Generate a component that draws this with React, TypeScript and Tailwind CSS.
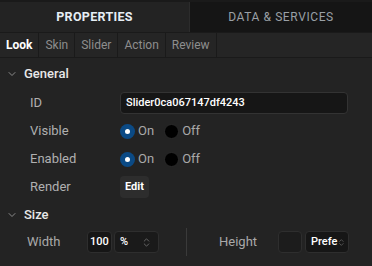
import { ChevronDown, ChevronsUpDown } from 'lucide-react'

const tabs = ['Look', 'Skin', 'Slider', 'Action', 'Review']

function Radio({ checked, label }: { checked: boolean; label: string }) {
  return (
    <div className="flex items-center gap-[3px]">
      {checked ? (
        <span className="flex h-[15px] w-[15px] items-center justify-center rounded-full bg-[#0b4a85]">
          <span className="h-[5px] w-[5px] rounded-full bg-white" />
        </span>
      ) : (
        <span className="h-[15px] w-[15px] rounded-full border border-[#2a2a2a] bg-black" />
      )}
      <span className="text-[13px] text-[#a9a9a9]">{label}</span>
    </div>
  )
}

function Row({ label, children }: { label: string; children: React.ReactNode }) {
  return (
    <div className="flex h-[28px] items-center">
      <span className="w-[120px] pl-[30px] text-[13px] text-[#b0b0b0]">{label}</span>
      {children}
    </div>
  )
}

export default function App() {
  return (
    <div
      className="h-[266px] w-[372px] overflow-hidden bg-[#232323]"
      style={{ fontFamily: 'Roboto, "Liberation Sans", sans-serif' }}
    >
      {/* top tabs */}
      <div className="flex h-[32px] border-t-2 border-[#1a1a1a]">
        <div className="flex w-[189px] items-center justify-center bg-[#232323] text-[12.5px] font-bold tracking-[0.3px] text-[#e6eef5]">
          PROPERTIES
        </div>
        <div className="flex flex-1 items-center justify-center border-l border-[#2c2c2c] bg-[#151515] text-[12px] tracking-[0.6px] text-[#9aa0a6]">
          DATA &amp; SERVICES
        </div>
      </div>

      {/* sub tabs */}
      <div className="flex h-[26px] border-y border-[#1a1a1a] bg-[#252525]">
        {tabs.map((t, i) => (
          <div
            key={t}
            className={`flex items-center border-r border-[#1a1a1a] px-[6px] text-[12px] ${
              i === 0 ? 'font-bold text-white' : 'text-[#8e8e8e]'
            }`}
          >
            {t}
          </div>
        ))}
      </div>

      {/* General */}
      <div className="flex h-[31px] items-center gap-[6px] pl-[6px] pt-[1px]">
        <ChevronDown size={12} className="text-[#8a8a8a]" />
        <span className="text-[13px] font-medium text-[#e8e8e8]">General</span>
      </div>

      <Row label="ID">
        <div className="flex h-[22px] w-[228px] items-center rounded-[4px] border border-[#333] bg-[#161616] pl-[5px] text-[11px] font-medium text-white">
          Slider0ca067147df4243
        </div>
      </Row>
      <Row label="Visible">
        <div className="flex items-center gap-[10px]">
          <Radio checked label="On" />
          <Radio checked={false} label="Off" />
        </div>
      </Row>
      <Row label="Enabled">
        <div className="flex items-center gap-[10px]">
          <Radio checked label="On" />
          <Radio checked={false} label="Off" />
        </div>
      </Row>
      <Row label="Render">
        <button className="flex h-[22px] items-center rounded-[4px] bg-[#2d2d2d] px-[5px] text-[11px] font-bold text-white">
          Edit
        </button>
      </Row>

      {/* Size */}
      <div className="flex h-[28px] items-center gap-[6px] pl-[6px]">
        <ChevronDown size={12} className="text-[#8a8a8a]" />
        <span className="text-[13px] font-medium text-[#e8e8e8]">Size</span>
      </div>

      <div className="flex h-[26px] items-center">
        <span className="w-[87px] pl-[27px] text-[13px] text-[#a9a9a9]">Width</span>
        <div className="flex h-[22px] w-[25px] items-center justify-center rounded-[4px] border border-[#2e2e2e] bg-[#161616] text-[11px] font-medium text-white">
          100
        </div>
        <div className="ml-[2px] flex h-[22px] w-[45px] items-center justify-between rounded-[4px] border border-[#2e2e2e] bg-[#1a1a1a] pl-[5px] pr-[6px] text-[11px] font-medium text-white">
          %
          <ChevronsUpDown size={11} className="text-[#6a6a6a]" />
        </div>
        <div className="ml-[27px] h-[28px] w-px bg-[#3a3a3a]" />
        <span className="ml-[32px] w-[59px] text-[13px] text-[#a9a9a9]">Height</span>
        <div className="h-[22px] w-[24px] rounded-[4px] border border-[#2e2e2e] bg-[#1c1c1c]" />
        <div className="ml-[3px] flex h-[22px] w-[44px] items-center justify-between rounded-[4px] border border-[#2e2e2e] bg-[#161616] pl-[5px] pr-[2px] text-[11px] font-medium text-white">
          Prefe
          <ChevronsUpDown size={11} className="text-[#6a6a6a]" />
        </div>
      </div>
    </div>
  )
}
